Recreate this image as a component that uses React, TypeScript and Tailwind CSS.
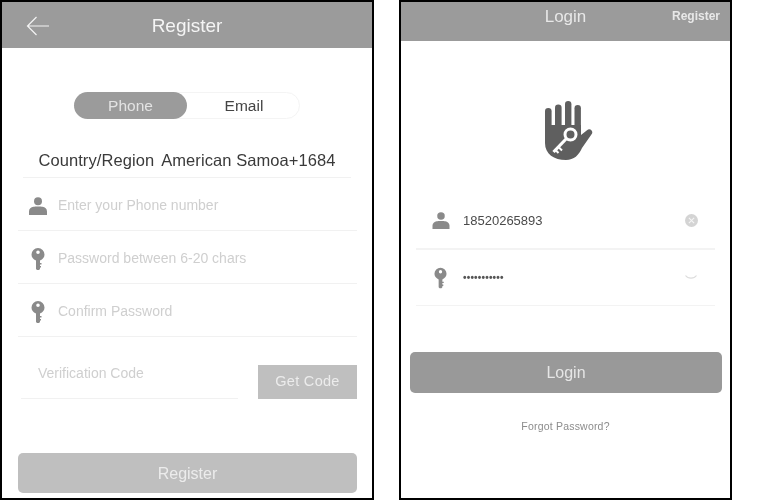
import React from "react";

function PersonIcon({ className }: { className: string }) {
  return (
    <svg viewBox="0 0 18 18" className={className} fill="currentColor">
      <circle cx="9" cy="4.2" r="4" />
      <path d="M0 18v-3.6c0-2.6 2-4 4.4-4.6 1.500-.4 7.700-.4 9.200 0 2.400.6 4.400 2 4.400 4.600V18z" />
    </svg>
  );
}

function KeyIcon({ className }: { className: string }) {
  return (
    <svg viewBox="0 0 14 22" className={className} fill="currentColor">
      <path
        fillRule="evenodd"
        d="M7 0a6.500 6.500 0 0 1 6.500 6.500c0 2.700-1.600 4.900-4.500 6V21l-1 1H6l-1-1v-8.500C2.100 11.400.5 9.200.5 6.500A6.500 6.500 0 0 1 7 0zm0 2.500a1.800 1.800 0 1 0 0 3.600 1.800 1.800 0 0 0 0-3.600z"
      />
      <path d="M8 15h2.500v1.500H8zM8 18h2v1.500H8z" />
    </svg>
  );
}

function HandKeyIcon({ className }: { className: string }) {
  return (
    <svg viewBox="0 0 48 60" className={className}>
      <g fill="#5f5f5f">
        <rect x="0" y="7" width="6.600" height="34" rx="3.300" />
        <rect x="10" y="3.500" width="6.600" height="34" rx="3.300" />
        <rect x="20" y="0" width="6.400" height="34" rx="3.200" />
        <rect x="29.500" y="4" width="6.400" height="34" rx="3.200" />
        <path d="M0 24h36v10l6-4.800c1.600-1.300 3.500-1 4.600.2 1 1.200 1 2.800-.2 4.100L37 47c-3 7-8 12-16 12C9 59 0 53 0 42z" />
      </g>
      <g fill="none" stroke="#fff">
        <circle cx="25.500" cy="33.500" r="5.500" strokeWidth="3" />
        <path d="M21.500 37.500L8.500 51" strokeWidth="3.200" />
        <path d="M13.500 46l3.500 3.500M10.500 49l3 3" strokeWidth="2" />
      </g>
    </svg>
  );
}

function FieldRow({ icon, text }: { icon: React.ReactNode; text: string }) {
  return (
    <div className="flex h-[53px] items-center border-b border-[#f1f1f1] pt-[3px]">
      <div className="flex w-[40px] justify-center text-[#8a8a8a]">{icon}</div>
      <span className="text-[14px] text-[#cfcfcf]">{text}</span>
    </div>
  );
}

function RegisterPanel() {
  return (
    <div className="flex h-[500px] w-[374px] shrink-0 flex-col border-2 border-black bg-white">
      <div className="relative flex h-[46px] shrink-0 items-center justify-center bg-[#9b9b9b] pt-[2px]">
        <svg viewBox="0 0 24 20" className="absolute left-[24px] top-[14px] h-[20px] w-[24px]" fill="none" stroke="#f4f4f4" strokeWidth="1.200">
          <path d="M23 10H1.500M10.500 1L1.500 10l9 9" />
        </svg>
        <span className="text-[19px] font-medium text-[#f5f5f5]">Register</span>
      </div>

      <div className="ml-[72px] mt-[44px] flex h-[27px] w-[226px] rounded-full border border-[#f4f4f4]">
        <div className="-m-px flex h-[27px] w-[113px] items-center justify-center rounded-full bg-[#9b9b9b] text-[15.500px] text-[#e3e3e3]">
          Phone
        </div>
        <div className="flex flex-1 items-center justify-center pl-[3px] text-[15.500px] text-[#444]">Email</div>
      </div>

      <div className="mx-[21px] mt-[24px] flex h-[35px] items-start justify-center gap-[7px] whitespace-nowrap border-b border-[#f1f1f1] pt-[7px] text-[16.500px] leading-[20px] tracking-[0.08px] text-[#3a3a3a]">
        <span>Country/Region</span>
        <span>American Samoa+1684</span>
      </div>

      <div className="ml-[16px] mr-[15px]">
        <FieldRow icon={<PersonIcon className="h-[18px] w-[18px]" />} text="Enter your Phone number" />
        <FieldRow icon={<KeyIcon className="h-[22px] w-[14px]" />} text="Password between 6-20 chars" />
        <FieldRow icon={<KeyIcon className="h-[22px] w-[14px]" />} text="Confirm Password" />

        <div className="mt-[28px] flex h-[34px] items-stretch justify-between">
          <div className="ml-[3px] w-[217px] border-b border-[#f1f1f1] pl-[17px] text-[14px] leading-[17px] text-[#cfcfcf]">
            Verification Code
          </div>
          <div className="flex w-[99px] items-center justify-center bg-[#bfbfbf] text-[14.500px] tracking-[0.3px] text-[#ececec]">
            Get Code
          </div>
        </div>

        <div className="mt-[54px] flex h-[40px] items-center justify-center rounded-[5px] bg-[#bfbfbf] pt-[1px] text-[16px] text-[#ececec]">
          Register
        </div>
      </div>
    </div>
  );
}

function LoginPanel() {
  return (
    <div className="flex h-[500px] w-[333px] shrink-0 flex-col border-2 border-black bg-white">
      <div className="relative flex h-[39px] shrink-0 items-start justify-center bg-[#9b9b9b] pt-[4px]">
        <span className="text-[17px] leading-[22px] text-[#e8e8e8]">Login</span>
        <span className="absolute right-[10px] top-[6px] text-[12px] font-bold leading-[16px] text-[#e8e8e8]">Register</span>
      </div>

      <div className="ml-[144px] mt-[60px] flex">
        <HandKeyIcon className="h-[60px] w-[48px]" />
      </div>

      <div className="mx-[15px] mt-[29px]">
        <div className="flex h-[60px] items-center border-b-2 border-[#f3f3f3] pt-[3px]">
          <div className="flex w-[47px] justify-center pl-[3px] text-[#8a8a8a]">
            <PersonIcon className="h-[17px] w-[18px]" />
          </div>
          <span className="flex-1 text-[13px] text-[#4a4a4a]">18520265893</span>
          <div className="mr-[17px] flex h-[13px] w-[13px] items-center justify-center rounded-full bg-[#d4d4d4]">
            <svg viewBox="0 0 8 8" className="h-[7px] w-[7px]" stroke="#f5f5f5" strokeWidth="1.300">
              <path d="M1 1l6 6M7 1L1 7" />
            </svg>
          </div>
        </div>
        <div className="flex h-[56px] items-center border-b border-[#f3f3f3]">
          <div className="flex w-[47px] justify-center pl-[1px] text-[#8a8a8a]">
            <KeyIcon className="h-[22px] w-[13px]" />
          </div>
          <span className="flex-1 text-[10px] font-bold leading-[10px] tracking-[0.2px] text-[#555]">•••••••••••</span>
          <svg viewBox="0 0 12 5" className="mr-[18px] h-[5px] w-[12px]" fill="none" stroke="#dddddd" strokeWidth="1.200">
            <path d="M.5.5C3 4 9 4 11.500.5" />
          </svg>
        </div>
      </div>

      <div className="ml-[9px] mr-[8px] mt-[46px] flex h-[41px] items-center justify-center rounded-[5px] bg-[#999999] text-[16px] text-[#e6e6e6]">
        Login
      </div>

      <div className="mt-[26px] text-center text-[10.500px] leading-[14px] tracking-[0.2px] text-[#8c8c8c]">
        Forgot Password?
      </div>
    </div>
  );
}

export default function App() {
  return (
    <div className="flex h-[500px] w-[761px] gap-[25px] overflow-hidden bg-white font-['Liberation_Sans',sans-serif] blur-[0.4px]">
      <RegisterPanel />
      <LoginPanel />
    </div>
  );
}
